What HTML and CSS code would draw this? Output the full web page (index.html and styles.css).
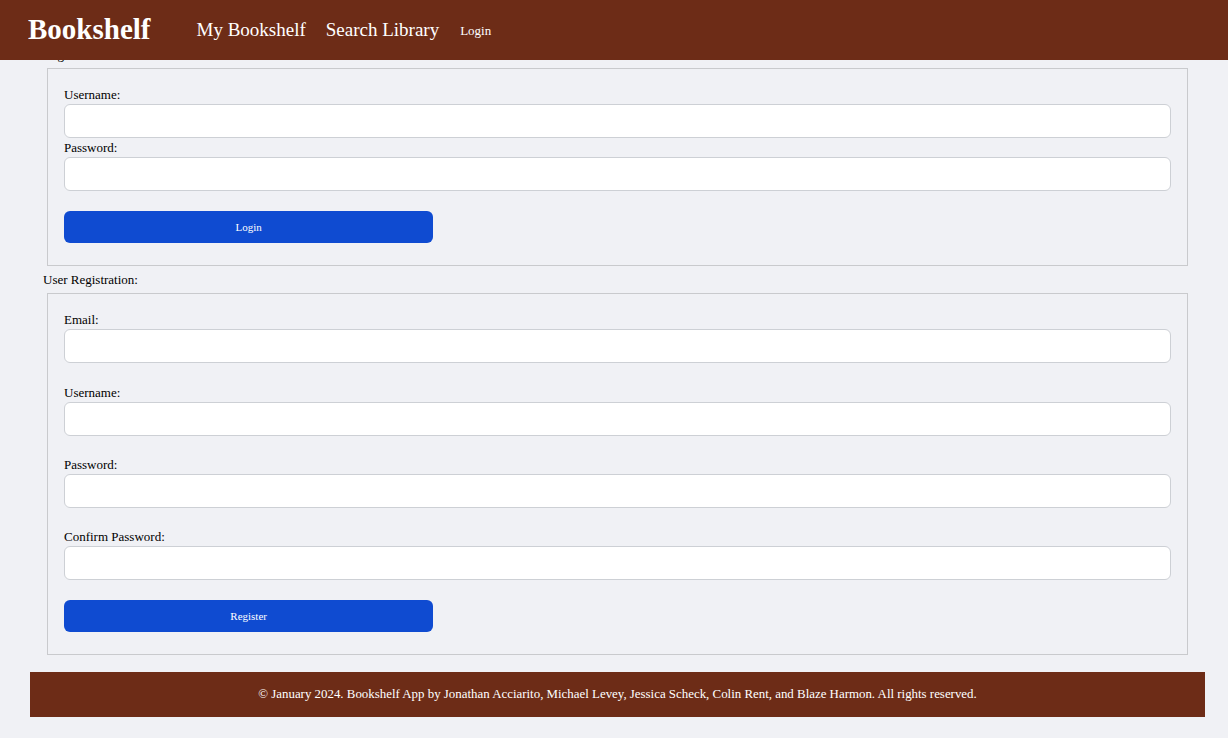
FILE: index.html
```html
<!DOCTYPE html>
<html lang="en">
<head>
<meta charset="utf-8">
<title>Bookshelf</title>
<link rel="stylesheet" href="styles.css">
</head>
<body>
<header class="site-header">
  <a class="brand" href="#">Bookshelf</a>
  <nav class="nav">
    <a class="nav-link" href="#">My Bookshelf</a>
    <a class="nav-link" href="#">Search Library</a>
    <a class="nav-link nav-small" href="#">Login</a>
  </nav>
</header>

<main class="main">
  <div class="section-title">Login:</div>
  <form class="box box-login">
    <label class="field-label" for="lu">Username:</label>
    <input class="field-input" id="lu" type="text">
    <label class="field-label field-label-tight" for="lp">Password:</label>
    <input class="field-input" id="lp" type="password">
    <button class="btn" type="button">Login</button>
  </form>

  <div class="section-title">User Registration:</div>
  <form class="box box-register">
    <div class="group">
      <label class="field-label" for="re">Email:</label>
      <input class="field-input" id="re" type="email">
    </div>
    <div class="group">
      <label class="field-label" for="ru">Username:</label>
      <input class="field-input" id="ru" type="text">
    </div>
    <div class="group">
      <label class="field-label" for="rp">Password:</label>
      <input class="field-input" id="rp" type="password">
    </div>
    <div class="group">
      <label class="field-label" for="rc">Confirm Password:</label>
      <input class="field-input" id="rc" type="password">
    </div>
    <button class="btn" type="button">Register</button>
  </form>
</main>

<footer class="site-footer">
  © January 2024. Bookshelf App by Jonathan Acciarito, Michael Levey, Jessica Scheck, Colin Rent, and Blaze Harmon. All rights reserved.
</footer>
</body>
</html>
```

FILE: styles.css
```css
* { box-sizing: border-box; }

html, body {
  margin: 0;
  padding: 0;
}

body {
  background: #f0f1f5;
  font-family: "Liberation Serif", "Times New Roman", serif;
  color: #000;
  font-size: 13px;
}

.site-header {
  position: fixed;
  top: 0;
  left: 0;
  right: 0;
  height: 60px;
  background: #6d2c17;
  display: flex;
  align-items: center;
  padding-left: 28px;
  z-index: 10;
}

.brand {
  color: #fff;
  text-decoration: none;
  font-weight: bold;
  font-size: 29px;
  line-height: 1.15;
  margin-right: 46px;
}

.nav {
  display: flex;
  align-items: center;
  gap: 20px;
}

.nav-link {
  color: #fff;
  text-decoration: none;
  font-size: 19px;
  line-height: 1.15;
}

.nav-small {
  font-size: 13px;
  margin-top: 2px;
  margin-left: 1px;
}

.main {
  padding: 47px 40px 0 43px;
}

.section-title {
  font-size: 13px;
  line-height: 15px;
  margin-bottom: 6px;
}

.box {
  margin: 0 0 6px 4px;
  border: 1px solid #c9cacd;
  padding: 18px 16px 22px 16px;
}

.box-register {
  padding-top: 18px;
  padding-bottom: 22px;
  margin-bottom: 0;
}

.field-label {
  display: block;
  font-size: 13px;
  line-height: 15px;
  margin-bottom: 2px;
}

.field-label-tight {
  margin-top: 2px;
}

.field-input {
  display: block;
  width: 100%;
  height: 34px;
  border: 1px solid #cdd0d5;
  border-radius: 6px;
  background: #fff;
  padding: 0 8px;
  font-family: inherit;
  font-size: 13px;
}

.group {
  margin-bottom: 21px;
}

.group:nth-child(1) {
  margin-bottom: 22px;
}

.group:last-of-type {
  margin-bottom: 0;
}

.btn {
  display: block;
  width: 33.36%;
  height: 32px;
  margin-top: 20px;
  background: #0f4bd1;
  color: #fff;
  border: none;
  border-radius: 6px;
  font-family: inherit;
  font-size: 11px;
}

.site-footer {
  margin: 17px 23px 21px 30px;
  height: 45px;
  background: #6d2c17;
  color: #fff;
  font-size: 12.9px;
  display: flex;
  align-items: center;
  justify-content: center;
}
```
